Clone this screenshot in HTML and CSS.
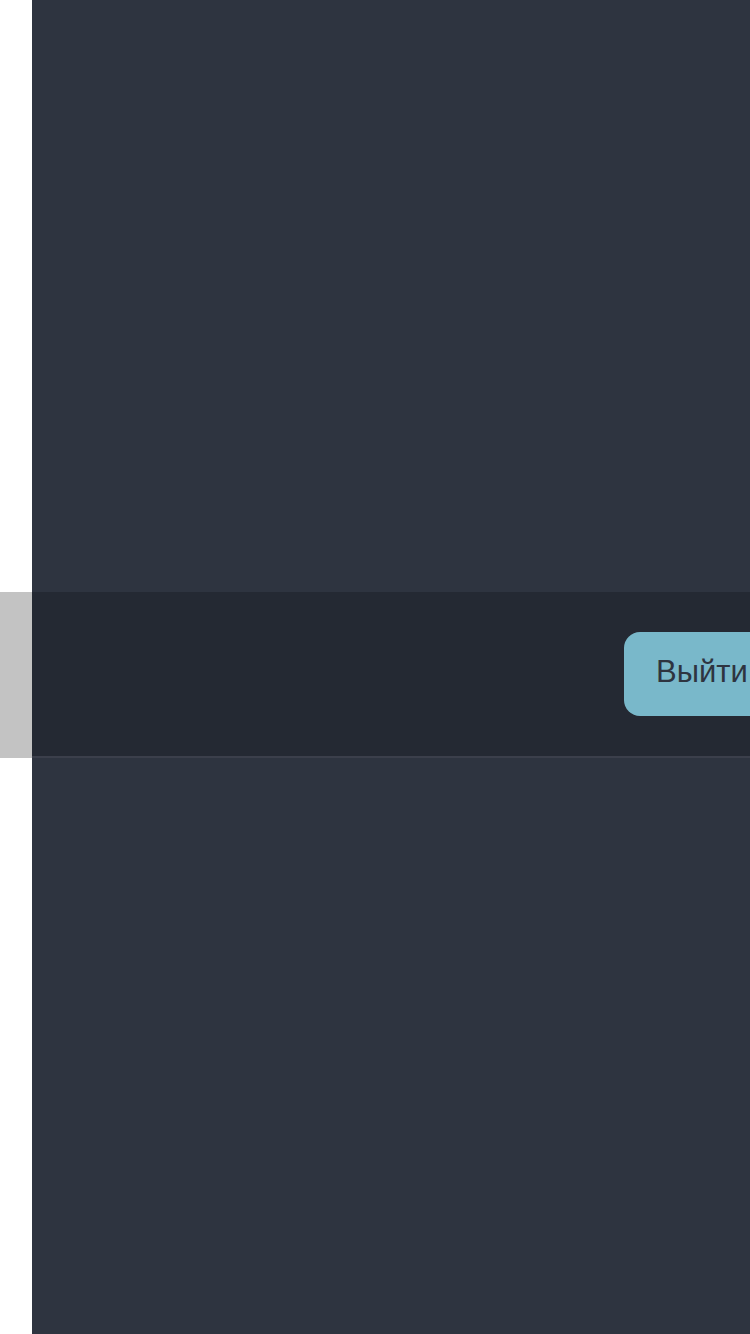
FILE: index.html
```html
<!DOCTYPE html>
<html lang="ru">
<head>
<meta charset="utf-8">
<link rel="stylesheet" href="styles.css">
</head>
<body>
<div class="page">
  <div class="gutter"></div>
  <div class="panel"></div>
  <div class="gutter gutter-bar"></div>
  <div class="bar">
    <button class="logout">Выйти</button>
  </div>
  <div class="gutter"></div>
  <div class="panel"></div>
</div>
</body>
</html>
```
FILE: styles.css
```css
html, body {
  margin: 0;
  padding: 0;
  width: 750px;
  height: 1334px;
  overflow: hidden;
  background: #ffffff;
  font-family: "Liberation Sans", Arial, sans-serif;
}
.page {
  display: grid;
  grid-template-columns: 32px 1fr;
  grid-template-rows: 592px 166px 1fr;
  height: 1334px;
}
.gutter {
  background: #ffffff;
}
.gutter-bar {
  background: #c3c3c3;
}
.panel {
  background: #2e3440;
}
.bar {
  background: #242933;
  border-bottom: 2px solid #3b3f4b;
  display: flex;
  align-items: center;
  padding-left: 592px;
  overflow: hidden;
  white-space: nowrap;
}
.logout {
  flex: none;
  height: 84px;
  padding: 0 32px 5px 32px;
  border: none;
  border-radius: 16px;
  background: #79b8ca;
  color: #2e3440;
  font-family: "Liberation Sans", Arial, sans-serif;
  font-size: 31px;
}
```
